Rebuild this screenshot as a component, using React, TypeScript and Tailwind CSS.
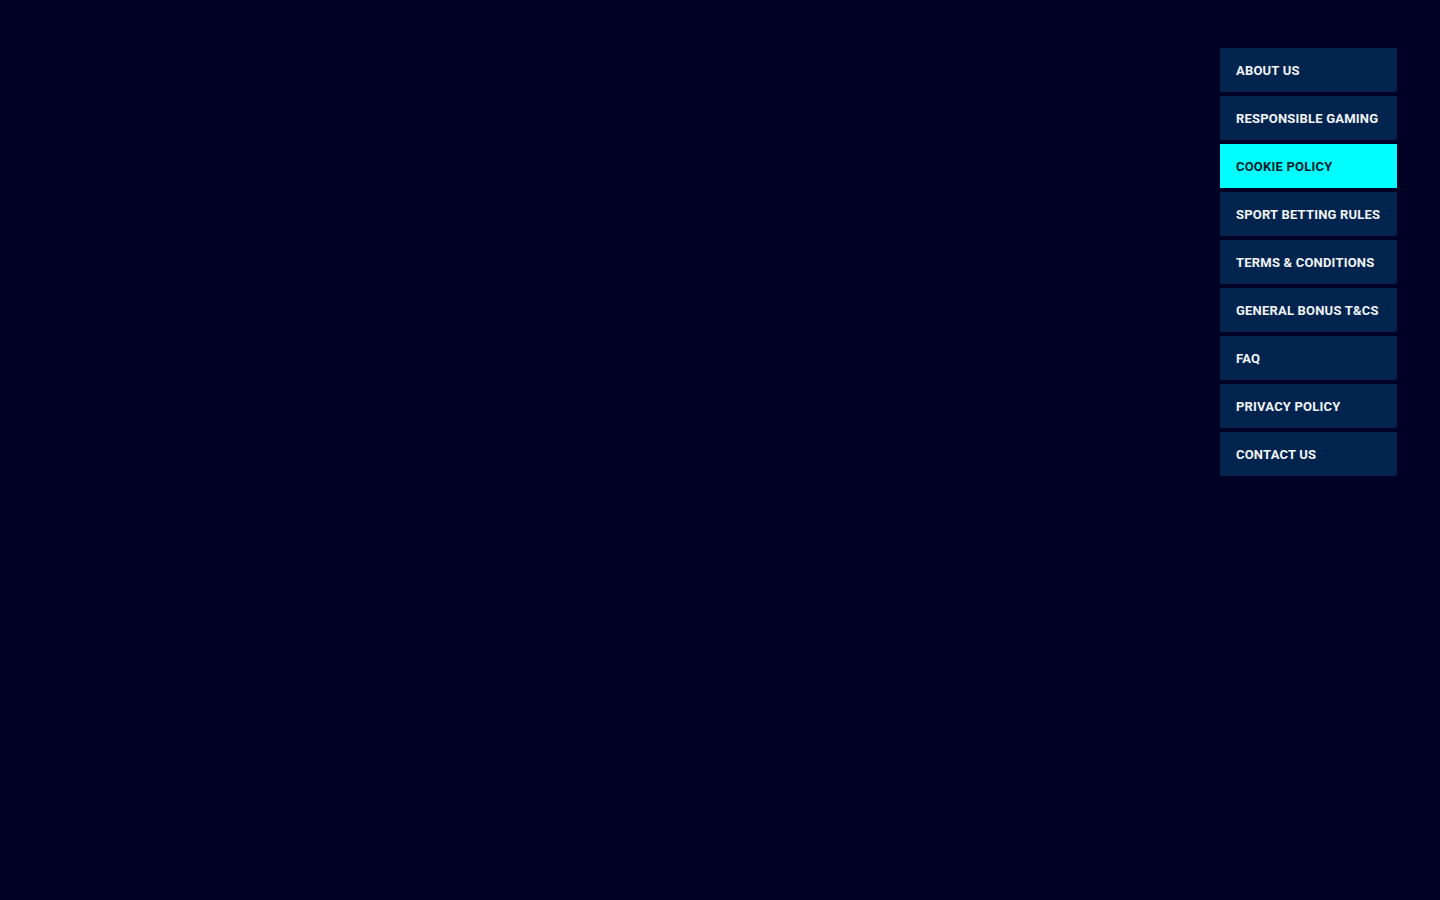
const links = [
  "ABOUT US",
  "RESPONSIBLE GAMING",
  "COOKIE POLICY",
  "SPORT BETTING RULES",
  "TERMS & CONDITIONS",
  "GENERAL BONUS T&CS",
  "FAQ",
  "PRIVACY POLICY",
  "CONTACT US",
];

const App = () => {
  const active = "COOKIE POLICY";

  return (
    <div
      className="min-h-screen w-full bg-[#000125] flex justify-end pt-12 pr-[43px]"
      style={{ fontFamily: 'Roboto, "Liberation Sans", sans-serif' }}
    >
      {/* Side menu */}
      <nav className="flex flex-col gap-1 w-[177px]">
        {links.map((label) => (
          <a
            key={label}
            href="#"
            className={
              label === active
                ? "flex h-11 items-center px-4 pt-px bg-[#00ffff] text-[#0a1a2a] text-[13px] font-bold tracking-[0.2px] whitespace-nowrap"
                : "flex h-11 items-center px-4 pt-px bg-[#01244f] text-[#f2f4f8] text-[13px] font-bold tracking-[0.2px] whitespace-nowrap"
            }
          >
            {label}
          </a>
        ))}
      </nav>
    </div>
  );
};

export default App;
